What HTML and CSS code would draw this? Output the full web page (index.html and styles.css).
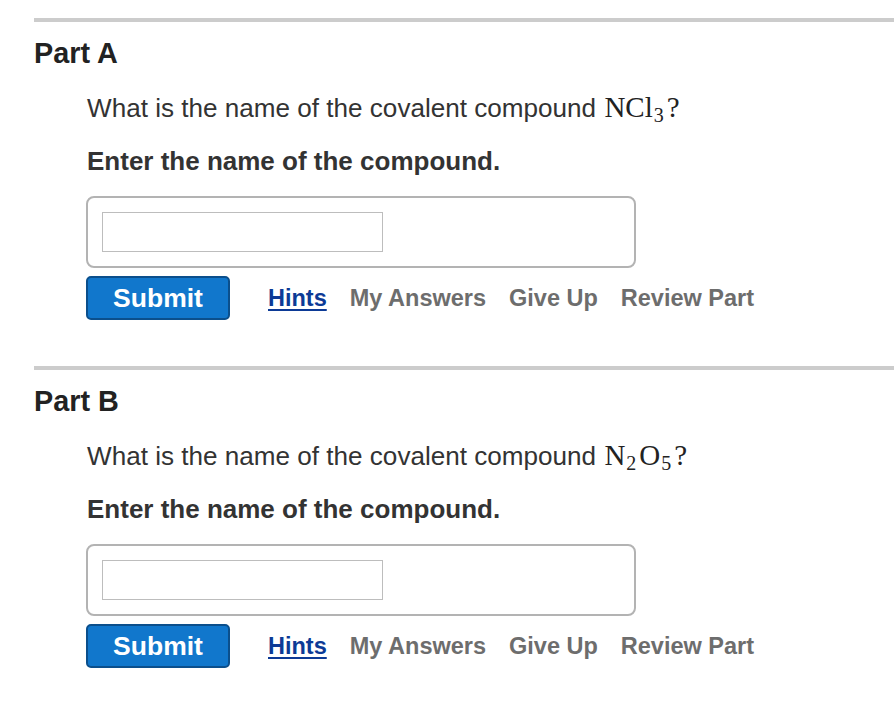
FILE: index.html
```html
<!DOCTYPE html>
<html lang="en">
<head>
  <meta charset="UTF-8" />
  <title>Naming Covalent Compounds</title>
  <meta name="viewport" content="width=device-width, initial-scale=1.0" />
  <link rel="stylesheet" href="styles.css">
</head>
<body>
  <div class="part">
    <h2 class="part-title">Part A</h2>
    <div class="part-body">
      <p class="question">What is the name of the covalent compound <span class="formula">NCl<sub>3</sub>?</span></p>
      <p class="prompt">Enter the name of the compound.</p>
      <div class="answer-box">
        <input class="answer-input" type="text">
      </div>
      <div class="actions">
        <button class="btn">Submit</button>
        <a class="link link-active" href="#">Hints</a>
        <span class="link">My Answers</span>
        <span class="link">Give Up</span>
        <span class="link">Review Part</span>
      </div>
    </div>
  </div>

  <div class="part">
    <h2 class="part-title">Part B</h2>
    <div class="part-body">
      <p class="question">What is the name of the covalent compound <span class="formula">N<sub>2</sub>O<sub>5</sub>?</span></p>
      <p class="prompt">Enter the name of the compound.</p>
      <div class="answer-box">
        <input class="answer-input" type="text">
      </div>
      <div class="actions">
        <button class="btn">Submit</button>
        <a class="link link-active" href="#">Hints</a>
        <span class="link">My Answers</span>
        <span class="link">Give Up</span>
        <span class="link">Review Part</span>
      </div>
    </div>
  </div>
</body>
</html>
```

FILE: styles.css
```css
* {
  box-sizing: border-box;
}

body {
  margin: 0;
  background-color: #fff;
  color: #333;
  font-family: 'Liberation Sans', Arial, sans-serif;
}

.part {
  margin: 18px 0 0 34px;
  border-top: 4px solid #cccccc;
  padding-top: 14px;
  padding-bottom: 46px;
}

.part + .part {
  margin-top: 0;
}

.part-title {
  margin: 0;
  font-size: 28.8px;
  line-height: 34px;
  font-weight: bold;
  color: #222;
}

.part-body {
  padding-left: 52px;
}

.question {
  margin: 21px 0 0 1px;
  font-size: 26.1px;
  line-height: 32px;
}

.formula {
  font-family: 'Liberation Serif', 'Times New Roman', serif;
  font-size: 29px;
  color: #222;
  margin-left: 1px;
}

.formula sub {
  font-size: 20px;
  line-height: 0;
  vertical-align: -5px;
  margin: 0 3px 0 1px;
}

.prompt {
  margin: 21px 0 0 1px;
  font-size: 26px;
  line-height: 32px;
  font-weight: bold;
}

.answer-box {
  margin-top: 19px;
  width: 550px;
  height: 72px;
  border: 2px solid #b3b3b3;
  border-radius: 8px;
  padding: 14px;
}

.answer-input {
  display: block;
  width: 281px;
  height: 40px;
  border: 1px solid #bdbdbd;
  margin: 0;
  padding: 0 6px;
  font-size: 20px;
}

.actions {
  display: flex;
  align-items: center;
  margin-top: 8px;
}

.btn {
  width: 144px;
  height: 44px;
  background-color: #1177cc;
  color: #fff;
  border: 2px solid #0b4f8c;
  border-radius: 5px;
  font-family: inherit;
  font-size: 26.5px;
  font-weight: bold;
  padding: 0;
  margin-right: 38px;
}

.link {
  font-size: 23.5px;
  font-weight: bold;
  color: #6d6d6d;
  margin-right: 23px;
  text-decoration: none;
}

.link-active {
  color: #0c3a96;
  text-decoration: underline;
  text-underline-offset: 3px;
  text-decoration-thickness: 2px;
}
```
